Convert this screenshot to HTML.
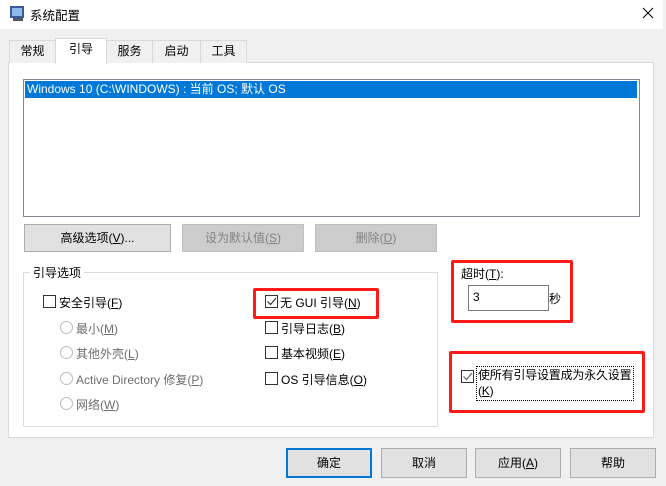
<!DOCTYPE html><html><head><meta charset="utf-8"><style>
*{box-sizing:border-box;margin:0;padding:0}
body{width:666px;height:486px;background:#f0f0f0;font-family:"Liberation Sans","Microsoft YaHei","Noto Sans CJK SC",sans-serif;font-size:12px;color:#000;position:relative;overflow:hidden}
.a{position:absolute}
.title{left:0;top:0;width:663px;height:29px;background:#fff}
.tab{top:40px;height:23px;border:1px solid #d9d9d9;border-bottom:none;background:#f0f0f0;text-align:center;line-height:21px}
.btn{height:28px;border:1px solid #adadad;background:#e1e1e1;text-align:center;line-height:26px}
.dis{background:#cccccc;border-color:#bfbfbf;color:#838383}
.cb{width:13px;height:13px;border:1px solid #333;background:#fff}
.rd{width:13px;height:13px;border:1px solid #bcbcbc;border-radius:50%;background:#fff}
.red{border:3px solid #ff1a1a;border-radius:2px}
.g{color:#6d6d6d}
</style></head><body>
<div class="a title"></div>
<div class="a" style="left:10px;top:6px;width:14px;height:12px;border:2px solid #3b5a9a;background:#8fb8e8"></div>
<div class="a" style="left:13px;top:18px;width:10px;height:3px;background:#556"></div>
<div class="a" style="left:30px;top:5px;font-size:12.5px">系统配置</div>
<svg class="a" style="left:642px;top:7px" width="12" height="12"><path d="M1 1L11 11M11 1L1 11" stroke="#000" stroke-width="1"/></svg>
<div class="a" style="left:663px;top:0;width:3px;height:486px;background:#f0f0f0"></div>
<div class="a" style="left:8px;top:62px;width:646px;height:376px;background:#fff;border:1px solid #d9d9d9"></div>
<div class="a tab" style="left:9px;width:47px">常规</div>
<div class="a tab" style="left:106px;width:47px">服务</div>
<div class="a tab" style="left:152px;width:49px">启动</div>
<div class="a tab" style="left:200px;width:47px">工具</div>
<div class="a tab" style="left:55px;top:38px;width:52px;height:26px;background:#fff;line-height:21px">引导</div>
<div class="a" style="left:23px;top:79px;width:617px;height:138px;border:1px solid #828790;background:#fff"></div>
<div class="a" style="left:25px;top:81px;width:612px;height:17px;background:#0078d7;color:#fff;line-height:17px;padding-left:2px">Windows 10 (C:\WINDOWS) : 当前 OS; 默认 OS</div>
<div class="a btn" style="left:24px;top:224px;width:147px">高级选项(<u>V</u>)...</div>
<div class="a btn dis" style="left:182px;top:224px;width:122px">设为默认值(<u>S</u>)</div>
<div class="a btn dis" style="left:315px;top:224px;width:122px">删除(<u>D</u>)</div>
<div class="a" style="left:23px;top:272px;width:415px;height:155px;border:1px solid #dcdcdc"></div>
<div class="a" style="left:30px;top:264px;background:#fff;padding:0 3px">引导选项</div>
<div class="a cb" style="left:43px;top:295px"></div><div class="a" style="left:59px;top:294px">安全引导(<u>F</u>)</div>
<div class="a rd" style="left:60px;top:321px"></div><div class="a g" style="left:76px;top:320px">最小(<u>M</u>)</div>
<div class="a rd" style="left:60px;top:346px"></div><div class="a g" style="left:76px;top:345px">其他外壳(<u>L</u>)</div>
<div class="a rd" style="left:60px;top:372px"></div><div class="a g" style="left:76px;top:371px">Active Directory 修复(<u>P</u>)</div>
<div class="a rd" style="left:60px;top:397px"></div><div class="a g" style="left:76px;top:396px">网络(<u>W</u>)</div>
<div class="a cb" style="left:265px;top:295px"><svg width="11" height="11" style="display:block"><path d="M1.5 5.5L4.5 8.5L10 2" stroke="#333" fill="none" stroke-width="1.2"/></svg></div><div class="a" style="left:280px;top:294px">无 GUI 引导(<u>N</u>)</div>
<div class="a cb" style="left:265px;top:321px"></div><div class="a" style="left:281px;top:320px">引导日志(<u>B</u>)</div>
<div class="a cb" style="left:265px;top:346px"></div><div class="a" style="left:281px;top:345px">基本视频(<u>E</u>)</div>
<div class="a cb" style="left:265px;top:372px"></div><div class="a" style="left:281px;top:371px">OS 引导信息(<u>O</u>)</div>
<div class="a red" style="left:253px;top:288px;width:126px;height:31px"></div>
<div class="a" style="left:461px;top:265px">超时(<u>T</u>):</div>
<div class="a" style="left:468px;top:285px;width:81px;height:26px;border:1px solid #7a7a7a;background:#fff;padding:4px 4px;font-size:12px">3</div>
<div class="a" style="left:549px;top:290px">秒</div>
<div class="a red" style="left:451px;top:260px;width:122px;height:63px"></div>
<div class="a cb" style="left:461px;top:370px;border-color:#333"><svg width="11" height="11" style="display:block"><path d="M1.5 5.5L4.5 8.5L10 2" stroke="#666" fill="none" stroke-width="1.2"/></svg></div>
<div class="a" style="left:476px;top:366px;width:158px;height:35px;border:1px dotted #000;line-height:16px;padding-left:1px;white-space:nowrap;font-size:12px;letter-spacing:-0.2px">使所有引导设置成为永久设置<br>(<u>K</u>)</div>
<div class="a red" style="left:449px;top:351px;width:196px;height:62px"></div>
<div class="a btn" style="left:286px;top:448px;width:86px;height:30px;border:2px solid #0078d7;line-height:26px">确定</div>
<div class="a btn" style="left:381px;top:448px;width:86px;height:30px;line-height:28px">取消</div>
<div class="a btn" style="left:475px;top:448px;width:86px;height:30px;line-height:28px">应用(<u>A</u>)</div>
<div class="a btn" style="left:570px;top:448px;width:86px;height:30px;line-height:28px">帮助</div>
</body></html>
